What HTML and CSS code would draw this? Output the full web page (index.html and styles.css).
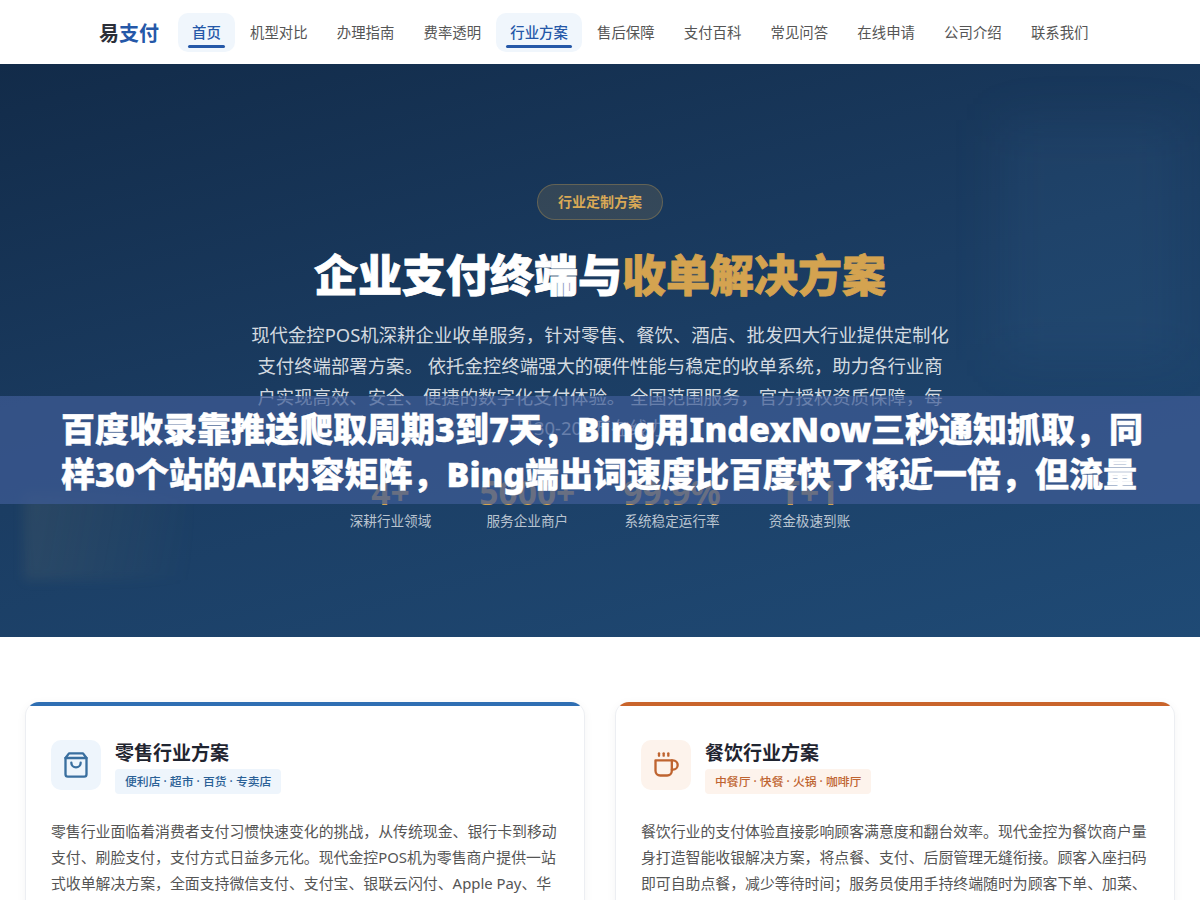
FILE: index.html
```html
<!DOCTYPE html>
<html lang="zh-CN">
<head>
    <meta charset="UTF-8">
    <meta name="viewport" content="width=device-width, initial-scale=1.0">
    <title>易支付 行业方案</title>
    <link rel="stylesheet" href="styles.css">
</head>
<body>
    <header class="nav">
        <a class="logo" href="#">易<span>支付</span></a>
        <nav class="nav-links">
            <a class="nav-link active" href="#">首页</a>
            <a class="nav-link" href="#">机型对比</a>
            <a class="nav-link" href="#">办理指南</a>
            <a class="nav-link" href="#">费率透明</a>
            <a class="nav-link active" href="#">行业方案</a>
            <a class="nav-link" href="#">售后保障</a>
            <a class="nav-link" href="#">支付百科</a>
            <a class="nav-link" href="#">常见问答</a>
            <a class="nav-link" href="#">在线申请</a>
            <a class="nav-link" href="#">公司介绍</a>
            <a class="nav-link" href="#">联系我们</a>
        </nav>
    </header>

    <section class="hero">
        <div class="glow glow-right"></div>
        <div class="glow glow-left"></div>
        <span class="hero-badge">行业定制方案</span>
        <h1 class="hero-title">企业支付终端与<span>收单解决方案</span></h1>
        <p class="hero-desc">现代金控POS机深耕企业收单服务，针对零售、餐饮、酒店、批发四大行业提供定制化支付终端部署方案。 依托金控终端强大的硬件性能与稳定的收单系统，助力各行业商户实现高效、安全、便捷的数字化支付体验。 全国范围服务，官方授权资质保障，每日30-200万在线办理</p>
        <div class="stats">
            <div class="stat"><strong>4+</strong><span>深耕行业领域</span></div>
            <div class="stat"><strong>5000+</strong><span>服务企业商户</span></div>
            <div class="stat"><strong>99.9%</strong><span>系统稳定运行率</span></div>
            <div class="stat"><strong>T+1</strong><span>资金极速到账</span></div>
        </div>
    </section>

    <section class="solutions">
        <article class="card card-blue">
            <div class="card-head">
                <div class="card-icon">
                    <svg viewBox="0 0 24 24" width="28" height="28"><path d="M6 2 3 6v14a2 2 0 0 0 2 2h14a2 2 0 0 0 2-2V6l-3-4Z"/><path d="M3 6h18"/><path d="M16 10a4 4 0 0 1-8 0"/></svg>
                </div>
                <div>
                    <h2>零售行业方案</h2>
                    <span class="card-tag">便利店 · 超市 · 百货 · 专卖店</span>
                </div>
            </div>
            <p>零售行业面临着消费者支付习惯快速变化的挑战，从传统现金、银行卡到移动支付、刷脸支付，支付方式日益多元化。现代金控POS机为零售商户提供一站式收单解决方案，全面支持微信支付、支付宝、银联云闪付、Apple Pay、华</p>
        </article>
        <article class="card card-orange">
            <div class="card-head">
                <div class="card-icon">
                    <svg viewBox="0 0 24 24" width="28" height="28"><path d="M17 8h1a4 4 0 1 1 0 8h-1"/><path d="M3 8h14v9a4 4 0 0 1-4 4H7a4 4 0 0 1-4-4Z"/><path d="M6 2v2"/><path d="M10 2v2"/><path d="M14 2v2"/></svg>
                </div>
                <div>
                    <h2>餐饮行业方案</h2>
                    <span class="card-tag">中餐厅 · 快餐 · 火锅 · 咖啡厅</span>
                </div>
            </div>
            <p>餐饮行业的支付体验直接影响顾客满意度和翻台效率。现代金控为餐饮商户量身打造智能收银解决方案，将点餐、支付、后厨管理无缝衔接。顾客入座扫码即可自助点餐，减少等待时间；服务员使用手持终端随时为顾客下单、加菜、</p>
        </article>
    </section>

    <div class="notice">百度收录靠推送爬取周期3到7天，Bing用IndexNow三秒通知抓取，同样30个站的AI内容矩阵，Bing端出词速度比百度快了将近一倍，但流量</div>
</body>
</html>
```

FILE: styles.css
```css
* {
    box-sizing: border-box;
}
body {
    margin: 0;
    font-family: "Noto Sans", "Noto Sans CJK SC", sans-serif;
    background-color: #fff;
    color: #333;
}
a {
    text-decoration: none;
}

/* nav */
.nav {
    height: 64px;
    padding-left: 99px;
    display: flex;
    align-items: center;
    background-color: #fff;
}
.logo {
    font-size: 20px;
    font-weight: 700;
    color: #2b2f38;
    margin-right: 19px;
}
.logo span {
    color: #2558a8;
}
.nav-links {
    display: flex;
    gap: 1.2px;
}
.nav-link {
    position: relative;
    display: flex;
    align-items: center;
    height: 39px;
    padding: 0 14px 2px;
    font-size: 14.4px;
    color: #555;
    border-radius: 10px;
}
.nav-link.active {
    background-color: #f0f6fc;
    color: #2558a8;
    font-weight: 500;
}
.nav-link.active::after {
    content: "";
    position: absolute;
    left: 10px;
    right: 10px;
    bottom: 4px;
    height: 3px;
    border-radius: 2px;
    background-color: #2558a8;
}

/* hero */
.hero {
    position: relative;
    height: 573px;
    padding-top: 120px;
    display: flex;
    flex-direction: column;
    align-items: center;
    overflow: hidden;
    background: linear-gradient(165deg, #122b49 0%, #1b3d63 50%, #1f4a75 100%);
    text-align: center;
}
.glow {
    position: absolute;
}
.glow-right {
    top: 56px;
    right: 20px;
    width: 180px;
    height: 240px;
    filter: blur(24px);
    background: rgba(90, 140, 190, 0.08);
}
.glow-left {
    left: 24px;
    top: 430px;
    width: 166px;
    height: 86px;
    filter: blur(6px);
    background: linear-gradient(100deg, rgba(190, 170, 110, 0.1), rgba(190, 170, 110, 0));
}
.hero-badge {
    position: relative;
    height: 36px;
    padding: 0 20px;
    line-height: 34px;
    font-size: 14px;
    font-weight: 600;
    color: #d9a956;
    background-color: rgba(212, 165, 80, 0.15);
    border: 1px solid rgba(212, 165, 80, 0.3);
    border-radius: 18px;
}
.hero-title {
    position: relative;
    margin: 22px 0 0;
    font-size: 44px;
    line-height: 66px;
    font-weight: 900;
    color: #fff;
    -webkit-text-stroke: 0.8px currentColor;
}
.hero-title span {
    color: #d4a350;
}
.hero-desc {
    position: relative;
    width: 700px;
    margin: 11px 0 0;
    font-size: 18.4px;
    line-height: 31px;
    color: rgba(255, 255, 255, 0.82);
}
.stats {
    position: relative;
    margin-top: 32px;
    display: flex;
    gap: 48px;
}
.stat {
    display: flex;
    flex-direction: column;
    align-items: center;
}
.stat strong {
    font-size: 33.6px;
    line-height: 34px;
    font-weight: 700;
    color: #d4a350;
}
.stat span {
    margin-top: 2px;
    font-size: 13.6px;
    line-height: 20px;
    color: rgba(255, 255, 255, 0.7);
}

/* industry cards */
.solutions {
    padding: 65px 25px 40px;
    display: grid;
    grid-template-columns: 1fr 1fr;
    gap: 30px;
}
.card {
    position: relative;
    padding: 38px 25px 26px;
    background-color: #fff;
    border: 1px solid #eceef2;
    border-top: 0;
    border-radius: 14px;
    box-shadow: 0 2px 10px rgba(0, 0, 0, 0.05);
    overflow: hidden;
}
.card::before {
    content: "";
    position: absolute;
    top: 0;
    left: 0;
    right: 0;
    height: 4px;
    background-color: #2f6fb3;
}
.card-orange::before {
    background-color: #c9642b;
}
.card-head {
    display: flex;
    gap: 14px;
    margin-bottom: 24px;
}
.card-icon {
    flex: none;
    width: 50px;
    height: 50px;
    display: flex;
    align-items: center;
    justify-content: center;
    border-radius: 10px;
    background-color: #eef5fc;
}
.card-icon svg {
    fill: none;
    stroke: #3a6f9f;
    stroke-width: 2;
    stroke-linecap: round;
    stroke-linejoin: round;
}
.card-orange .card-icon {
    background-color: #fdf3ec;
}
.card-orange .card-icon svg {
    stroke: #bf6430;
}
.card h2 {
    margin: 0;
    font-size: 19px;
    line-height: 26px;
    font-weight: 700;
    color: #1f2430;
}
.card-tag {
    display: inline-block;
    margin-top: 3px;
    padding: 0 10px;
    height: 25px;
    line-height: 25px;
    font-size: 11.84px;
    font-weight: 500;
    color: #2a6096;
    background-color: #eef5fc;
    border-radius: 4px;
}
.card-orange .card-tag {
    color: #bf6430;
    background-color: #fdf3ec;
}
.card p {
    margin: 0;
    font-size: 14.88px;
    line-height: 26px;
    color: #555;
}

/* band over the page */
.notice {
    position: absolute;
    top: 396px;
    left: 0;
    width: 100%;
    height: 108px;
    padding: 11px 40px 0 61px;
    font-family: "Noto Sans", "Noto Sans CJK SC", sans-serif;
    font-size: 34px;
    line-height: 45px;
    font-weight: 900;
    color: #fff;
    -webkit-text-stroke: 0.4px currentColor;
    background-color: rgba(62, 92, 150, 0.72);
    overflow: hidden;
}
```
